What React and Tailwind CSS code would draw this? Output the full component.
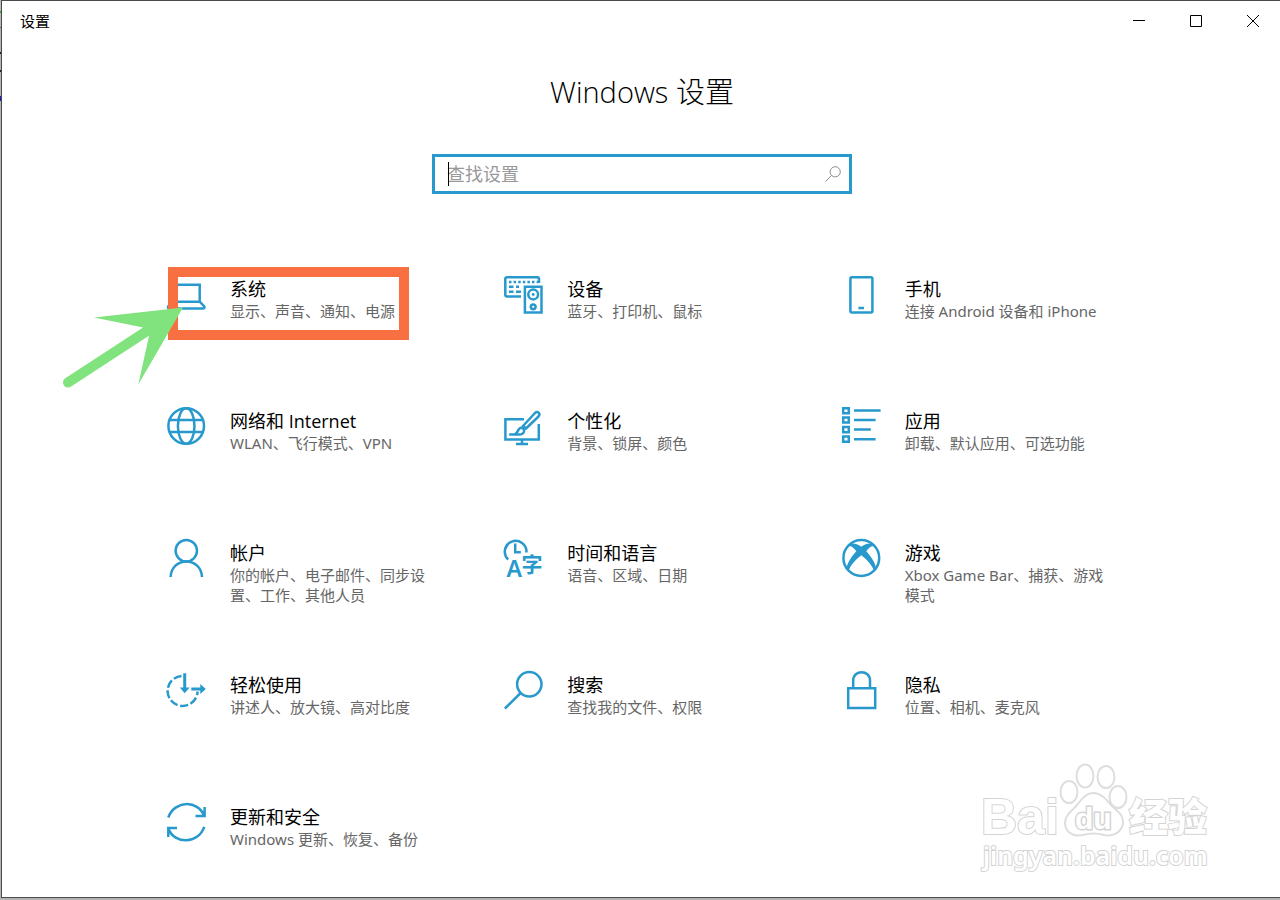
import React, { useState } from "react";

const SystemIcon = () => (
  <>
    <path d="M4.5 26.7V9.7H32.7V26.7Z" />
    <path d="M4.5 26.7L1 31.7Q.8 33.6 2.5 33.6H36Q38.2 33.2 37.3 31.5L32.7 26.7" />
  </>
);

const DevicesIcon = () => (
  <>
    <path d="M17 21.5H3Q1.3 21.5 1.3 19.8V4Q1.3 2.3 3 2.3H33.3Q35 2.3 35 4V8" />
    <path d="M5 7H34" strokeDasharray="2.5 2.1" />
    <path d="M5 11.7H9.5M12 11.7H15M5 16.7H9.5M12 16.7H17" />
    <path d="M20.9 11.8H37.5V37.6H20.9Z" />
    <circle cx="29.2" cy="19.5" r="4.9" />
    <circle cx="29.2" cy="19.5" r="1.4" fill="currentColor" stroke="none" />
    <circle cx="29.2" cy="31.8" r="2.4" />
  </>
);

const PhoneIcon = () => (
  <>
    <rect x="8.4" y="2.2" width="22" height="35.4" rx="1.5" />
    <path d="M16.4 33H22" />
  </>
);

const NetworkIcon = () => (
  <>
    <circle cx="19.2" cy="19" r="17.8" />
    <ellipse cx="19.2" cy="19" rx="8.3" ry="17.8" />
    <path d="M3 13H35.4M3 25H35.4" />
  </>
);

const PersonalizeIcon = () => (
  <>
    <path d="M20 12.3H1.4V32.6H34.8V17" />
    <path d="M18 32.6V37M12 37H24" />
    <path d="M19 19L30.5 6.5Q33 4 34.8 5.8Q36.5 7.6 34 10L22 21.5Z" />
    <path d="M5.2 27.5H15C21 27.5 21.5 21.5 17.5 20.8C13.5 20.5 14.5 26.5 10.5 27.5" />
  </>
);

const AppsIcon = () => (
  <>
    <path d="M1.2 1.2H6.8V6.2H1.2ZM1.2 10.5H6.8V15.6H1.2ZM1.2 20H6.8V25.2H1.2ZM1.2 29.6H6.8V34.8H1.2Z" />
    <path d="M12 3.4H38.6M12 13H33.6M12 22.6H28.8M12 32.2H33.6" />
  </>
);

const AccountIcon = () => (
  <>
    <circle cx="19.3" cy="11.8" r="10.7" />
    <path d="M3.6 38C4 28.5 11 22.5 19.3 22.5S34.6 28.5 35 38" />
  </>
);

const TimeIcon = () => (
  <>
    <path d="M4.2 20.5A10.8 10.8 0 1 1 22.4 13.5" />
    <path d="M11.2 4.5V13.2H16.8" />
    <g fill="currentColor" stroke="none">
      <text x="2.5" y="38" fontSize="23" fontWeight="600">A</text>
      <text x="17.5" y="33" fontSize="21" fontWeight="700">字</text>
    </g>
  </>
);

const GameIcon = () => (
  <>
    <circle cx="19.3" cy="19" r="17.9" />
    <path
      fill="currentColor"
      stroke="none"
      d="M8.5 5C12 3.6 16.5 5.8 19.3 7.8C22 5.8 26.6 3.6 30.1 5L31 7.2C29 6.8 26.5 9 24.3 12.2C28.8 17 33.8 24 34 29.5L31.8 31.5C30.5 26.5 25 20.5 19.3 16.2C13.6 20.5 8.1 26.5 6.8 31.5L4.6 29.5C4.8 24 9.8 17 14.3 12.2C12.1 9 9.6 6.8 7.6 7.2Z"
    />
  </>
);

const EaseIcon = () => (
  <>
    <path d="M14.5 5A15 15 0 1 0 30.6 20.5" strokeDasharray="8.2 2.6" />
    <path d="M17.7 2.3V18M24.3 18H34" strokeWidth="3" />
    <path
      d="M12.8 16.5H22.6L17.7 22.3ZM33.3 13V23L38.8 18Z"
      fill="currentColor"
      stroke="none"
    />
  </>
);

const SearchIcon = () => (
  <>
    <circle cx="25.3" cy="13.2" r="12.2" />
    <path d="M16.6 22L.9 37.5" />
  </>
);

const PrivacyIcon = () => (
  <>
    <path d="M6.2 17.2H33.2V36.9H6.2Z" />
    <path d="M11.2 17.2V9.5C11.2-1.6 28-1.6 28 9.5V17.2" />
  </>
);

const UpdateIcon = () => (
  <>
    <path d="M1.3 14.5C7.5-3 31-3 37 12.5M37.6 4V13H28.5" />
    <path d="M37.3 23.8C31 41.5 7.5 41.5 1.6 26M1.3 34V25H10" />
  </>
);

const categories = [
  { title: "系统", desc: "显示、声音、通知、电源", Icon: SystemIcon, marked: true },
  { title: "设备", desc: "蓝牙、打印机、鼠标", Icon: DevicesIcon },
  { title: "手机", desc: "连接 Android 设备和 iPhone", Icon: PhoneIcon },
  { title: "网络和 Internet", desc: "WLAN、飞行模式、VPN", Icon: NetworkIcon },
  { title: "个性化", desc: "背景、锁屏、颜色", Icon: PersonalizeIcon },
  { title: "应用", desc: "卸载、默认应用、可选功能", Icon: AppsIcon },
  {
    title: "帐户",
    desc: "你的帐户、电子邮件、同步设置、工作、其他人员",
    Icon: AccountIcon,
  },
  { title: "时间和语言", desc: "语音、区域、日期", Icon: TimeIcon },
  { title: "游戏", desc: "Xbox Game Bar、捕获、游戏模式", Icon: GameIcon },
  { title: "轻松使用", desc: "讲述人、放大镜、高对比度", Icon: EaseIcon },
  { title: "搜索", desc: "查找我的文件、权限", Icon: SearchIcon },
  { title: "隐私", desc: "位置、相机、麦克风", Icon: PrivacyIcon },
  { title: "更新和安全", desc: "Windows 更新、恢复、备份", Icon: UpdateIcon },
];

// orange frame and green arrow lying over the first category
const Marker = () => (
  <>
    <span className="absolute left-[33px] -top-2 w-[241px] h-[73px] border-[10px] border-[#f87041] pointer-events-none" />
    <svg
      className="absolute -left-[75px] top-[25px] w-[130px] h-[92px] text-[#80e37e] pointer-events-none"
      viewBox="0 0 130 92"
      fill="currentColor"
      aria-hidden="true"
    >
      <path d="M8 82.5L90 29" stroke="currentColor" strokeWidth="10" strokeLinecap="round" />
      <path d="M123 7.5L34 17.5L83 27.5L89 36L78.3 84.5Z" />
    </svg>
  </>
);

const Category = ({ item }) => {
  const { title, desc, Icon, marked } = item;
  return (
    <a href="#" className="relative flex items-start gap-6 pl-8 pr-9">
      <svg
        className="shrink-0 w-[39px] h-[39px] overflow-visible text-[#2899cd]"
        viewBox="0 0 39 39"
        fill="none"
        stroke="currentColor"
        strokeWidth="2.5"
        aria-hidden="true"
      >
        <Icon />
      </svg>
      <span className="block pt-[2px]">
        <span className="block font-['Open_Sans','Noto_Sans_CJK_SC',sans-serif] text-lg leading-6 text-black">
          {title}
        </span>
        <span className="block text-[15px] leading-5 text-[#666666]">{desc}</span>
      </span>
      {marked ? <Marker /> : null}
    </a>
  );
};

const Watermark = () => (
  <svg
    className="absolute right-[60px] bottom-4 w-[250px] h-[130px] pointer-events-none"
    viewBox="0 0 250 130"
    fill="#ffffff"
    stroke="#d4d4d4"
    strokeWidth="2"
    paintOrder="stroke"
    aria-hidden="true"
  >
    <text
      x="11"
      y="83"
      fontSize="50"
      fontWeight="700"
      className="font-['Liberation_Sans',sans-serif]"
    >
      Bai
    </text>
    <g paintOrder="normal" stroke="#dedede">
      <ellipse cx="99" cy="41" rx="8.5" ry="11" />
      <ellipse cx="115" cy="25" rx="8.5" ry="11.5" />
      <ellipse cx="136" cy="26" rx="8.5" ry="11" />
      <ellipse cx="148" cy="46" rx="8.5" ry="11" />
      <path d="M123 42C131 42 136 48 141 54C148 61 154 64 153 73C151 82 142 86 134 84C127 82 120 82 113 84C103 86 95 81 95 72C95 64 102 60 107 54C112 48 116 42 123 42Z" />
    </g>
    <text
      x="105"
      y="78"
      fontSize="30"
      fontWeight="700"
      strokeWidth="3"
      className="font-['Liberation_Sans',sans-serif]"
    >
      du
    </text>
    <text x="159" y="80" fontSize="39" fontWeight="900">经验</text>
    <text x="13" y="114" fontSize="25" fontWeight="600">jingyan.baidu.com</text>
  </svg>
);

const App = () => {
  const [query, setQuery] = useState("");

  return (
    <div className="min-h-screen flex flex-col pl-px pb-[2px] bg-[linear-gradient(to_bottom,#b8bcb8_11px,#3f9f3f_11px,#3f9f3f_13px,#b8bcb8_13px,#b8bcb8_27px,#2a8a2a_27px,#2a8a2a_28px,#b4b4b4_28px,#b4b4b4_52px,#222222_52px,#222222_54px,#b4b4b4_54px,#b4b4b4_70px,#222222_70px,#222222_72px,#b4b4b4_72px,#b4b4b4_96px,#1a1ac8_96px,#1a1ac8_101px,#b4b4b4_101px)] font-['Noto_Sans','Noto_Sans_CJK_SC',sans-serif]">
      <div className="relative grow flex flex-col bg-white border-l border-t border-b border-[#4a4a4a] overflow-hidden">
        <header className="h-10 flex items-center justify-between pl-[18px]">
          <span className="text-[15px] text-black">设置</span>
          <div className="flex -mr-px text-black">
            <button className="w-[57px] h-10 flex items-center justify-center" aria-label="最小化">
              <svg className="w-3 h-3" viewBox="0 0 12 12" stroke="currentColor" fill="none">
                <path d="M0 5.5H12" />
              </svg>
            </button>
            <button className="w-[57px] h-10 flex items-center justify-center" aria-label="最大化">
              <svg className="w-3 h-3" viewBox="0 0 12 12" stroke="currentColor" fill="none">
                <path d="M.5.5H11.5V11.5H.5Z" />
              </svg>
            </button>
            <button className="w-[57px] h-10 flex items-center justify-center" aria-label="关闭">
              <svg className="w-3 h-3" viewBox="0 0 12 12" stroke="currentColor" fill="none">
                <path d="M0 0L12 12M12 0L0 12" />
              </svg>
            </button>
          </div>
        </header>

        <main className="flex flex-col items-center pt-[31px]">
          <section className="w-full flex flex-col items-center pl-[2px]">
            <h1 className="font-['Open_Sans','Noto_Sans_CJK_SC',sans-serif] text-[29px] leading-10 font-light text-black">
              Windows 设置
            </h1>

            <form
              className="relative mt-[42px] w-[420px] max-w-[90vw] h-10 flex items-center border-[3px] border-[#2899cd] bg-white px-3"
              onSubmit={(e) => e.preventDefault()}
            >
              <input
                className="grow min-w-0 text-lg leading-6 text-black placeholder:text-[#999999] outline-none"
                type="text"
                aria-label="查找设置"
                placeholder="查找设置"
                value={query}
                onChange={(e) => setQuery(e.target.value)}
              />
              <span className="absolute left-[13px] top-[5px] w-px h-6 bg-black" />
              <button type="submit" aria-label="搜索" className="-mr-1">
                <svg className="w-4 h-4 text-[#8c8c8c]" viewBox="0 0 16 16" stroke="currentColor" fill="none">
                  <circle cx="10.2" cy="5.8" r="5.1" />
                  <path d="M6.5 9.5L.5 15.5" />
                </svg>
              </button>
            </form>
          </section>

          <nav className="mt-[81px] w-full max-w-[1012px] grid grid-cols-3 auto-rows-[minmax(66px,auto)] gap-y-[66px]">
            {categories.map((item, index) => (
              <Category key={index} item={item} />
            ))}
          </nav>
        </main>

        <Watermark />
      </div>
    </div>
  );
};

export default App;
